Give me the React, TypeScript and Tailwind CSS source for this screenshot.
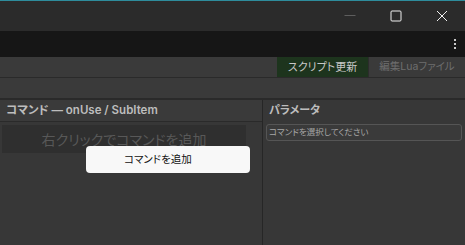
import React from "react";

export default function App() {
  const jp = "[font-family:Inter,'Noto_Sans_CJK_JP',sans-serif] [font-feature-settings:'palt']";
  return (
    <div className={`w-[465px] h-[245px] bg-[#373737] flex flex-col overflow-hidden ${jp}`}>
      <div className="h-px bg-[#2e8c9c] shrink-0" />
      <div className="h-[30px] bg-[#2b2b2b] flex justify-end shrink-0">
        <div className="w-[46px] flex items-center justify-center">
          <svg width="12" height="12" viewBox="0 0 12 12">
            <line x1="0.5" y1="5.5" x2="11.5" y2="5.5" stroke="#5e5e5e" strokeWidth="1" />
          </svg>
        </div>
        <div className="w-[46px] flex items-center justify-center">
          <svg width="12" height="12" viewBox="0 0 12 12">
            <rect x="1" y="1" width="10" height="10" rx="1" fill="none" stroke="#f0f0f0" strokeWidth="1" />
          </svg>
        </div>
        <div className="w-[46px] flex items-center justify-center">
          <svg width="12" height="12" viewBox="0 0 12 12">
            <path d="M1 1 L11 11 M11 1 L1 11" stroke="#f0f0f0" strokeWidth="1" />
          </svg>
        </div>
      </div>
      <div className="h-[26px] bg-[#161616] flex justify-end items-center pr-[9px] shrink-0">
        <div className="flex flex-col gap-[2px]">
          <div className="w-[2px] h-[2px] bg-[#c8c8c8]" />
          <div className="w-[2px] h-[2px] bg-[#c8c8c8]" />
          <div className="w-[2px] h-[2px] bg-[#c8c8c8]" />
        </div>
      </div>
      <div className="h-[20px] bg-[#3a3a3a] flex justify-end shrink-0">
        <div className="w-[91px] bg-[#1d341d] flex items-center justify-center text-[11px] text-[#c8c8c8]">
          スクリプト更新
        </div>
        <div className="w-px bg-[#2c2c2c]" />
        <div className="w-[96px] flex items-center justify-center text-[10.5px] text-[#6e6e6e]">
          編集Luaファイル
        </div>
      </div>
      <div className="h-px bg-[#2a2a2a] shrink-0" />
      <div className="h-[20px] bg-[#3a3a3a] shrink-0" />
      <div className="h-[2px] bg-[#2a2a2a] shrink-0" />
      <div className="flex-1 flex min-h-0">
        <div className="w-[262px] flex flex-col relative">
          <div className="h-[21px] bg-[#3a3a3a] flex items-center pl-[6px] text-[11.5px] font-semibold text-[#bdbdbd] shrink-0">
            コマンド — onUse / SubItem
          </div>
          <div className="h-px bg-[#2a2a2a] shrink-0" />
          <div className="flex-1 pt-[3px] px-[2px] pr-[16px]">
            <div className="h-[28px] bg-[#2f2f2f] flex items-center justify-center text-[14px] text-[#585858]">
              右クリックでコマンドを追加
            </div>
          </div>
          <div className="absolute left-[86px] top-[46px] w-[164px] h-[27px] bg-[#f8f8f8] rounded-[4px] flex items-center pl-[38px] text-[10.5px] text-[#111]">
            コマンドを追加
          </div>
        </div>
        <div className="w-px bg-[#262626]" />
        <div className="flex-1 flex flex-col px-[3px]">
          <div className="h-[21px] flex items-center pl-[3px] text-[11px] font-semibold text-[#bdbdbd] shrink-0">
            パラメータ
          </div>
          <div className="mt-[3px] h-[17px] rounded-[3px] border border-[#555] bg-[#3a3a3a] flex items-center pl-[2px] text-[8.5px] text-[#a8a8a8]">
            コマンドを選択してください
          </div>
        </div>
      </div>
    </div>
  );
}
